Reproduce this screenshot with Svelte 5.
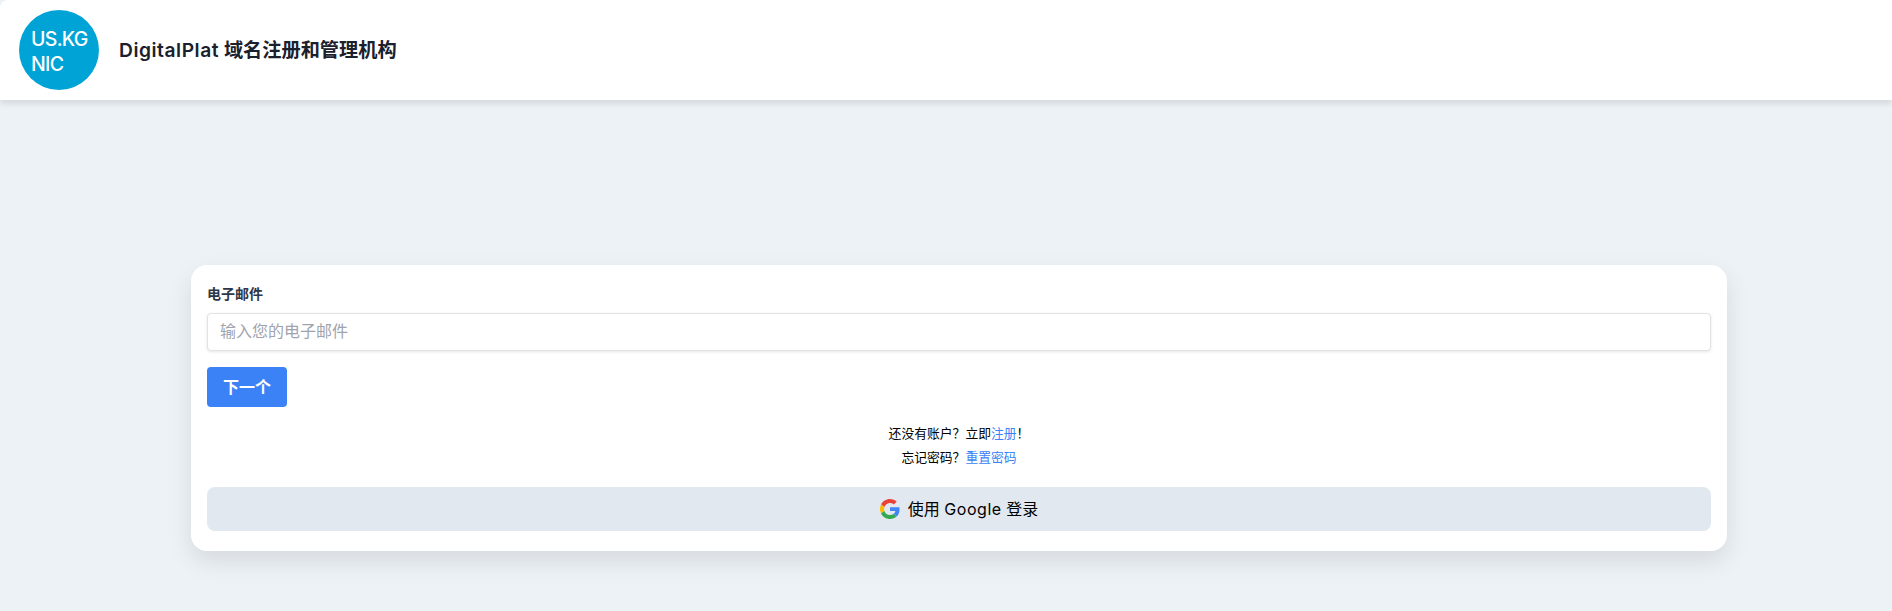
<script>
  let email = $state('')
</script>

<header class="nav">
  <div class="logo"><span>US.KG</span><span>NIC</span></div>
  <h1><span class="latin">DigitalPlat</span> 域名注册和管理机构</h1>
</header>

<main class="wrap">
  <form class="card" onsubmit={(e) => e.preventDefault()}>
    <label for="email">电子邮件</label>
    <input id="email" type="email" bind:value={email} placeholder="输入您的电子邮件" />
    <button class="next" type="submit">下一个</button>
    <p class="links first">还没有账户？立即<a href="#signup">注册</a>！</p>
    <p class="links">忘记密码？<a href="#reset">重置密码</a></p>
    <button class="google" type="button">
      <svg viewBox="0 0 48 48" width="20" height="20" aria-hidden="true">
        <path fill="#EA4335" d="M24 9.5c3.54 0 6.71 1.22 9.21 3.6l6.85-6.85C35.9 2.38 30.47 0 24 0 14.62 0 6.51 5.38 2.56 13.22l7.98 6.19C12.43 13.72 17.74 9.5 24 9.5z"/>
        <path fill="#4285F4" d="M46.98 24.55c0-1.57-.15-3.09-.38-4.55H24v9.02h12.94c-.58 2.96-2.26 5.48-4.78 7.18l7.73 6c4.51-4.18 7.09-10.36 7.09-17.65z"/>
        <path fill="#FBBC05" d="M10.53 28.59c-.48-1.45-.76-2.99-.76-4.59s.27-3.14.76-4.59l-7.98-6.19C.92 16.46 0 20.12 0 24c0 3.88.92 7.54 2.56 10.78l7.97-6.19z"/>
        <path fill="#34A853" d="M24 48c6.48 0 11.93-2.13 15.89-5.81l-7.73-6c-2.15 1.45-4.92 2.3-8.16 2.3-6.26 0-11.57-4.22-13.47-9.91l-7.98 6.19C6.51 42.62 14.62 48 24 48z"/>
      </svg>
      <span class="google-text">使用 <span class="latin">Google</span> 登录</span>
    </button>
  </form>
</main>

<style>
  :global(body) {
    background: #edf2f7;
    font-family: "Inter", "Noto Sans CJK SC", sans-serif;
    color: #000;
  }
  .nav {
    display: flex;
    align-items: center;
    gap: 20px;
    height: 100px;
    box-sizing: border-box;
    padding: 0 19px;
    background: #fff;
    border-radius: 8px 0 0 0;
    box-shadow: 0 4px 6px rgba(0, 0, 0, 0.1);
  }
  .logo {
    width: 80px;
    height: 80px;
    flex: none;
    box-sizing: border-box;
    padding: 3px 0 0 12px;
    border-radius: 50%;
    background: #00a3d6;
    color: #fff;
    display: flex;
    flex-direction: column;
    justify-content: center;
    font-size: 19.5px;
    font-weight: 500;
    line-height: 25px;
    letter-spacing: -0.7px;
  }
  h1 {
    margin: 0;
    padding-bottom: 2px;
    font-size: 19.2px;
    font-weight: 600;
    color: #1a202c;
  }
  .latin {
    letter-spacing: 0.55px;
  }
  .wrap {
    min-height: 511px;
    box-sizing: border-box;
    padding: 165px 0 0 191px;
  }
  .card {
    width: 1536px;
    height: 286px;
    box-sizing: border-box;
    padding: 21px 16px 0;
    background: #fff;
    border-radius: 16px;
    box-shadow: 0 10px 25px rgba(0, 0, 0, 0.1);
    display: flex;
    flex-direction: column;
  }
  label {
    font-size: 14px;
    line-height: 15px;
    font-weight: 700;
    color: #2d3748;
    margin-bottom: 12px;
  }
  input {
    height: 38px;
    box-sizing: border-box;
    padding: 0 12px 2px;
    border: 1px solid #e2e2e6;
    border-radius: 4px;
    box-shadow: 0 1px 3px rgba(0, 0, 0, 0.1);
    font: inherit;
    font-size: 16px;
    outline: none;
  }
  input::placeholder {
    color: #a0a3ad;
  }
  .next {
    align-self: flex-start;
    width: 80px;
    height: 40px;
    margin-top: 16px;
    padding: 0 0 3px;
    border: 0;
    border-radius: 4px;
    background: #3b82f6;
    color: #fff;
    font: inherit;
    font-size: 16px;
    font-weight: 600;
  }
  .links {
    margin: 0;
    height: 24px;
    line-height: 24px;
    font-size: 12.8px;
    text-align: center;
  }
  .first {
    margin-top: 15px;
  }
  a {
    color: #3b82f6;
    text-decoration: none;
  }
  .google {
    margin-top: 17px;
    height: 44px;
    border: 0;
    border-radius: 8px;
    background: #e2e8f0;
    color: #000;
    font: inherit;
    font-size: 16px;
    display: flex;
    align-items: center;
    justify-content: center;
    gap: 8px;
  }
  .google-text {
    padding-bottom: 3px;
  }
</style>
